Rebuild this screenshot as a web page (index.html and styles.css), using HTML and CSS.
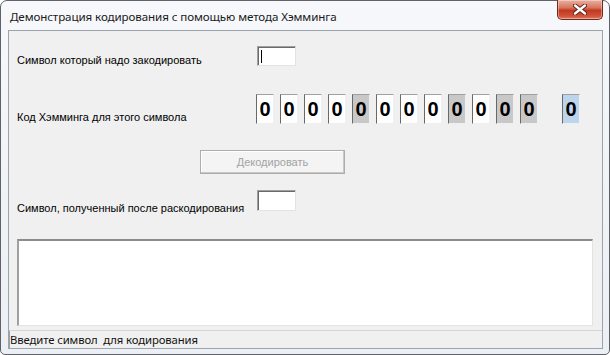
FILE: index.html
```html
<!DOCTYPE html>
<html lang="ru">
<head>
<meta charset="utf-8">
<title>Хэмминг</title>
<link rel="stylesheet" href="styles.css">
</head>
<body>
<div class="window">
  <div class="titlebar">
    <span class="title">Демонстрация кодирования с помощью метода Хэмминга</span>
    <button class="close" aria-label="Закрыть">
      <svg width="14" height="11" viewBox="0 0 14 11"><path d="M2 1.5 L12 9.5 M12 1.5 L2 9.5" stroke="#5a1f14" stroke-width="4.2" stroke-linecap="round"/><path d="M2 1.5 L12 9.5 M12 1.5 L2 9.5" stroke="#ffffff" stroke-width="2.4" stroke-linecap="round"/></svg>
    </button>
  </div>
  <div class="client">
    <div class="form">
      <div class="row row-input">
        <span class="label label-input">Символ который надо закодировать</span>
        <div class="edit"><span class="caret"></span></div>
      </div>
      <div class="row row-code">
        <span class="label label-code">Код Хэмминга для этого символа</span>
        <div class="bits">
          <span class="bit">0</span>
          <span class="bit">0</span>
          <span class="bit">0</span>
          <span class="bit">0</span>
          <span class="bit parity">0</span>
          <span class="bit">0</span>
          <span class="bit">0</span>
          <span class="bit">0</span>
          <span class="bit parity">0</span>
          <span class="bit">0</span>
          <span class="bit parity">0</span>
          <span class="bit parity">0</span>
          <span class="bit check">0</span>
        </div>
      </div>
      <div class="row row-button">
        <button class="btn" disabled>Декодировать</button>
      </div>
      <div class="row row-output">
        <span class="label label-output">Символ, полученный после раскодирования</span>
        <div class="edit edit-tall"></div>
      </div>
      <div class="memo"></div>
    </div>
    <div class="status"><span class="status-text">Введите символ  для кодирования</span></div>
  </div>
</div>
</body>
</html>
```
FILE: styles.css
```css
html, body {
  margin: 0;
  padding: 0;
  background: #ffffff;
}
.window {
  box-sizing: border-box;
  width: 610px;
  height: 355px;
  border: 1px solid #5f6369;
  border-radius: 7px 7px 5px 5px;
  background: linear-gradient(#f6f8fb, #eceff3);
  padding: 0 6px 5px 7px;
  display: flex;
  flex-direction: column;
  font-family: "Liberation Sans", Arial, sans-serif;
}
.titlebar {
  height: 29px;
  flex: none;
  display: flex;
  align-items: flex-start;
  position: relative;
}
.title {
  font-family: "Noto Sans", "Open Sans", sans-serif;
  font-size: 11.6px;
  color: #1a1a1a;
  margin: 8px 0 0 2px;
  letter-spacing: -0.1px;
}
.close {
  position: absolute;
  right: 0;
  top: -1px;
  width: 46px;
  height: 20px;
  border: 1px solid #6e2a1e;
  border-top: none;
  border-radius: 0 0 5px 5px;
  background: linear-gradient(#eab0a2 0%, #d8755e 40%, #c0391f 55%, #d0533a 85%, #e07f64 100%);
  padding: 0;
  display: flex;
  align-items: center;
  justify-content: center;
  box-shadow: inset 0 0 0 1px rgba(255,255,255,0.35);
}
.client {
  flex: 1;
  min-height: 0;
  background: #f0f0f0;
  border: 1px solid #9ba3ad;
  display: flex;
  flex-direction: column;
  font-size: 11px;
  color: #000;
}
.form {
  flex: 1;
  min-height: 0;
  display: flex;
  flex-direction: column;
  padding: 15px 0 0 8px;
}
.row {
  flex: none;
  display: flex;
  align-items: flex-start;
}
.row-input {
  height: 20px;
}
.row-code {
  height: 30px;
  margin-top: 28px;
}
.row-button {
  height: 24px;
  margin-top: 26px;
  padding-left: 183px;
}
.row-output {
  height: 21px;
  margin-top: 16px;
}
.label {
  width: 240px;
  flex: none;
  line-height: 13px;
}
.label-input {
  padding-top: 8px;
}
.label-code {
  padding-top: 17px;
  width: 239px;
}
.label-output {
  padding-top: 12px;
}
.edit {
  box-sizing: border-box;
  width: 39px;
  height: 20px;
  background: #fff;
  border-style: solid;
  border-width: 1px;
  border-color: #a0a0a0 #e3e3e3 #e3e3e3 #a0a0a0;
  box-shadow: inset 1px 1px 0 #696969;
  display: flex;
  align-items: center;
  padding-left: 3px;
}
.edit-tall {
  height: 21px;
}
.caret {
  width: 1px;
  height: 13px;
  background: #000;
}
.bits {
  display: flex;
  gap: 6px;
}
.bit {
  box-sizing: border-box;
  width: 18px;
  height: 30px;
  background: #fff;
  border-style: solid;
  border-width: 1px;
  border-color: #a0a0a0 #f0f0f0 #f0f0f0 #696969;
  font-family: "Liberation Sans", Arial, sans-serif;
  font-weight: bold;
  font-size: 20px;
  line-height: 28px;
  text-align: center;
  color: #000;
}
.bit.parity {
  background: #c8c8c8;
}
.bit.check {
  background: #bcd4ec;
  margin-left: 18px;
}
.btn {
  box-sizing: border-box;
  width: 145px;
  height: 24px;
  background: #f4f4f4;
  border: 1px solid #adadad;
  border-radius: 0;
  box-shadow: inset -1px -1px 0 #c8c8c8, inset 1px 1px 0 #ffffff;
  color: #a3a3a3;
  font-family: "Liberation Sans", Arial, sans-serif;
  font-size: 11px;
  padding: 0;
}
.memo {
  flex: none;
  box-sizing: border-box;
  width: 576px;
  height: 87px;
  margin-top: 28px;
  background: #fff;
  border-style: solid;
  border-width: 2px 1px 1px 2px;
  border-color: #8c8c8c #e3e3e3 #e3e3e3 #a0a0a0;
}
.status {
  flex: none;
  height: 17px;
  margin-top: 3px;
  border-top: 1px solid #d5d5d5;
  background: #f0f0f0;
  display: flex;
  align-items: center;
  box-shadow: inset 1px 0 0 #a0a0a0;
}
.status-text {
  font-family: "Noto Sans", "Open Sans", sans-serif;
  font-size: 11.3px;
  white-space: pre;
  padding-left: 1px;
  color: #111;
  letter-spacing: -0.1px;
}
```
